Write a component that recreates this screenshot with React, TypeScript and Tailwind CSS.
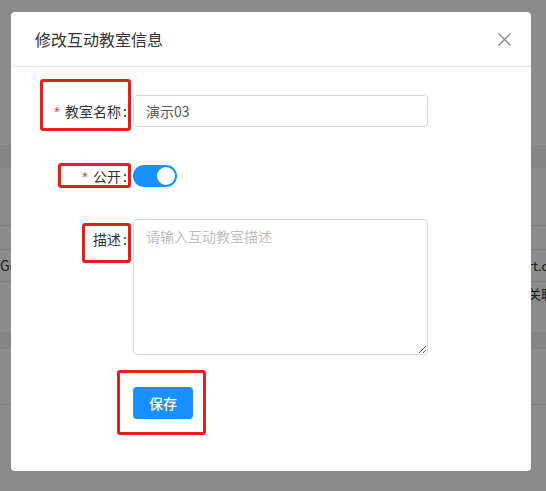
import React from 'react';

const cjk = "font-['Noto_Sans_CJK_SC','Noto_Sans',sans-serif]";

// label cell on the left of each form row
const FormLabel = ({ text, required }: { text: string; required?: boolean }) => (
  <div className="flex w-[98px] shrink-0 items-center justify-end pr-[6px] text-[14px] leading-[22px] text-[#333]">
    {required && (
      <span className="mr-[4px] inline-block translate-y-[3px] font-['Liberation_Mono',monospace] text-[14px] leading-[14px] text-[#f5222d]">
        *
      </span>
    )}
    <span>{text}</span>
    <span className="ml-[2px]">:</span>
  </div>
);

// red annotation frame drawn over the screenshot
const Mark = ({ className }: { className: string }) => (
  <div className={`pointer-events-none absolute rounded-[3px] border-[3px] border-[#e3211c] ${className}`} />
);

const BackgroundPage: React.FC = () => (
  <div className={`flex h-[491px] w-full flex-col overflow-hidden bg-white text-[14px] text-[#333] ${cjk}`}>
    <div className="h-[145px] shrink-0" />
    <div className="h-[23px] shrink-0 bg-[#f2f2f2]" />
    <div className="h-[58px] shrink-0 border-b border-[#e6e6e6]" />
    <div className="h-[24px] shrink-0 border-b border-[#e6e6e6]" />
    <div className="flex h-[32px] shrink-0 items-center whitespace-nowrap border-b border-[#e6e6e6]">
      <span className="w-[528px] shrink-0">Go</span>
      <span className="text-[13px]">rt.com</span>
    </div>
    <div className="flex h-[50px] shrink-0 whitespace-nowrap pt-[2px]">
      <span className="w-[528px] shrink-0" />
      <span className="text-[13px]">关联</span>
    </div>
    <div className="h-[17px] shrink-0 bg-[#f2f2f2]" />
    <div className="h-[56px] shrink-0 border-b border-[#e6e6e6]" />
    <div className="flex-1" />
  </div>
);

const App: React.FC = () => {
  return (
    <div className={`relative h-[491px] w-full overflow-hidden ${cjk}`}>
      <BackgroundPage />
      <div className="absolute inset-0 bg-black/45" />

      <div className="absolute left-[11px] top-[12px] flex h-[459px] w-[520px] flex-col rounded-[4px] bg-white">
        {/* header */}
        <div className="flex h-[55px] shrink-0 items-center justify-between border-b border-[#e8e8e8] pl-6">
          <span className="text-[16px] leading-[22px] text-[#333]">修改互动教室信息</span>
          <button className="flex h-[54px] w-[54px] items-center justify-center">
            <svg width="13" height="13" viewBox="0 0 13 13" fill="none" stroke="#8c8c8c" strokeWidth="1.3">
              <path d="M0.5 0.5L12.5 12.5M12.5 0.5L0.5 12.5" />
            </svg>
          </button>
        </div>

        {/* body */}
        <div className="flex flex-col px-6 pt-[28px]">
          <div className="flex h-[32px] items-center">
            <FormLabel text="教室名称" required />
            <div className="flex h-[32px] w-[295px] items-center rounded-[4px] border border-[#d9d9d9] px-[12px] text-[14px] text-[#595959]">
              演示03
            </div>
          </div>

          <div className="mt-[33px] flex h-[32px] items-center">
            <FormLabel text="公开" required />
            <div className="flex h-[22px] w-[44px] items-center justify-end rounded-full bg-[#1890ff] px-[2px]">
              <div className="h-[18px] w-[18px] rounded-full bg-white" />
            </div>
          </div>

          <div className="mt-[27px] flex items-start">
            <div className="pt-[9px]">
              <FormLabel text="描述" />
            </div>
            <textarea
              className={`h-[136px] w-[295px] resize-y rounded-[4px] border border-[#d9d9d9] px-[12px] py-[5px] text-[14px] leading-[22px] text-[#595959] outline-none placeholder:text-[#bfbfbf] ${cjk}`}
              placeholder="请输入互动教室描述"
            />
          </div>

          <div className="mt-[32px] flex pl-[98px]">
            <button className="h-[32px] w-[60px] rounded-[4px] bg-[#1890ff] text-[14px] font-medium text-white">
              保存
            </button>
          </div>
        </div>
      </div>

      <Mark className="left-[40px] top-[79px] h-[52px] w-[91px]" />
      <Mark className="left-[58px] top-[163px] h-[25px] w-[73px]" />
      <Mark className="left-[82px] top-[223px] h-[40px] w-[49px]" />
      <Mark className="left-[117px] top-[370px] h-[65px] w-[89px]" />
    </div>
  );
};

export default App;
